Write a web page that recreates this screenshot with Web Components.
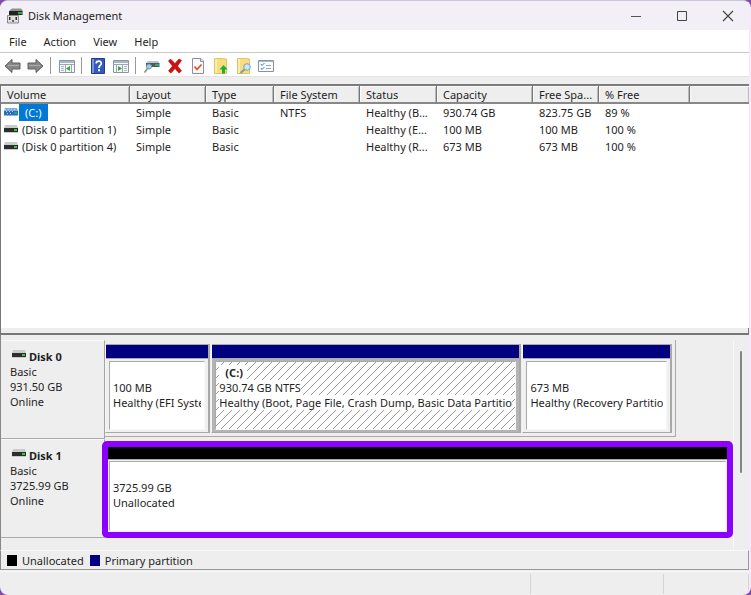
<!DOCTYPE html>
<html lang="en">
<head>
<meta charset="utf-8">
<meta name="viewport" content="width=device-width, initial-scale=1">
<title>Disk Management</title>
<style>
  html, body { height: 100%; }
  body {
    margin: 0;
    background: #7d4fa8;
    color: #1e1e1e;
    font: 11px/15px "Noto Sans", "Open Sans", sans-serif;
    overflow: hidden;
  }
</style>
</head>
<body>
<disk-window>
  <title-bar slot="title">Disk Management</title-bar>
  <menu-bar slot="menu"></menu-bar>
  <tool-bar slot="tools"></tool-bar>
  <volume-list slot="volumes"></volume-list>
  <disk-pane slot="disks">
    <disk-row name="Disk 0" kind="Basic" size="931.50 GB" state="Online">
      <disk-partition style="--share:104" size="100 MB" status="Healthy (EFI Syste"></disk-partition>
      <disk-partition style="--share:312" selected label="(C:)" size="930.74 GB NTFS" status="Healthy (Boot, Page File, Crash Dump, Basic Data Partitio"></disk-partition>
      <disk-partition style="--share:149" size="673 MB" status="Healthy (Recovery Partitio"></disk-partition>
    </disk-row>
    <disk-row whole name="Disk 1" kind="Basic" size="3725.99 GB" state="Online">
      <disk-partition unallocated size="3725.99 GB" status="Unallocated"></disk-partition>
    </disk-row>
  </disk-pane>
  <color-legend slot="legend"></color-legend>
  <status-bar slot="status"></status-bar>
</disk-window>

<script>
const define = (name, html, setup) => customElements.define(name, class extends HTMLElement {
  constructor() {
    super();
    const t = document.createElement('template');
    t.innerHTML = html;
    this.attachShadow({ mode: 'open' }).append(t.content.cloneNode(true));
  }
  connectedCallback() { if (setup) setup(this, this.shadowRoot); }
});

define('disk-window', `
<style>
  :host { display: grid; grid-template-rows: auto auto auto minmax(0, 1fr) auto auto auto; box-sizing: border-box; height: 100vh;
    background: #eeeeee; border-radius: 8px; overflow: hidden; border-top: 1px solid #cdc3da; border-right: 2px solid #f5e9fb; }
  .list { margin-top: 7px; min-height: 0; display: grid; }
</style>
<slot name="title"></slot>
<slot name="menu"></slot>
<slot name="tools"></slot>
<div class="list"><slot name="volumes"></slot></div>
<slot name="disks"></slot>
<slot name="legend"></slot>
<slot name="status"></slot>`);

define('title-bar', `
<style>
  :host { display: flex; align-items: center; gap: 4px; height: 29px; background: #f2eff7; padding-left: 7px; }
  h1 { font: inherit; margin: 0 auto 0 1px; }
  button { width: 42px; height: 29px; padding: 0; border: 0; background: none; display: grid; place-items: center; }
</style>
<svg width="16" height="16" viewBox="0 0 16 16" aria-hidden="true">
  <path d="M3 2 5 .5h9L15.500 2v1.500H2z" fill="#8d9490"/><path d="M2 3h13.500v4H2z" fill="#1d2421"/><path d="M11 4h4v2h-4z" fill="#2fae3e"/>
  <path d="M.5 7.500h11V15H.5z" fill="#dedede" stroke="#8a8a8a"/><path d="M2 9h1.500v3H2zM8.500 9H10v3H8.500z" fill="#333"/><path d="M5 12h2v2H5z" fill="#666"/>
</svg>
<h1><slot></slot></h1>
<button aria-label="Minimize"><svg width="12" height="12"><path d="M1 6.500h10" stroke="#555"/></svg></button>
<button aria-label="Maximize"><svg width="12" height="12"><path d="M1.500 1.500h9v9h-9z" fill="none" stroke="#444"/></svg></button>
<button aria-label="Close"><svg width="12" height="12"><path d="m1 1 10 10M11 1 1 11" stroke="#444" stroke-width="1.200"/></svg></button>`);

define('menu-bar', `
<style>
  :host { display: block; background: #fff; border-bottom: 1px solid #c9c9c9; }
  nav { display: flex; height: 22px; gap: 17px; padding-left: 9px; }
  button { font: inherit; color: inherit; border: 0; background: none; padding: 0; }
</style>
<nav aria-label="Menu"><button>File</button><button>Action</button><button>View</button><button>Help</button></nav>`);

define('tool-bar', `
<style>
  :host { display: flex; align-items: center; background: #fff; padding: 2px 0 0 1px; box-sizing: border-box; height: 24px; border-bottom: 1px solid #e4e4e4; }
  button { width: 23px; height: 20px; padding: 0; border: 0; background: none; display: grid; place-items: center; }
  i { width: 8px; height: 17px; box-sizing: border-box; background: linear-gradient(#999, #999) 3px 0 / 1px 100% no-repeat; }
</style>
<button aria-label="Back"><svg width="17" height="16"><path d="M1 8 8 1.500v3.500h8v6H8v3.500z" fill="#888" stroke="#5e5e5e"/><path d="M4 7.500h11" stroke="#aaa"/></svg></button>
<button aria-label="Forward"><svg width="17" height="16"><path d="M16 8 9 1.500v3.500H1v6h8v3.500z" fill="#888" stroke="#5e5e5e"/><path d="M2 7.500h11" stroke="#aaa"/></svg></button>
<i></i>
<button aria-label="Show console tree"><svg width="16" height="16"><path d="M.5 2.500h15v12H.5z" fill="#f6f8fa" stroke="#8995a5"/><path d="M1 3h14v2H1z" fill="#a9b6c6"/><path d="M1 6.500h14M6.500 7v7M12.500 7v7" stroke="#9ba7b5"/><path d="M2 8.500h3M2 10.500h3M2 12.500h3" stroke="#a7b6c8"/><path d="M11 8v5l-4-2.500z" fill="#35a834"/></svg></button>
<i></i>
<button aria-label="Help"><svg width="14" height="16"><path d="M.5.5h13v15H.5z" fill="#3459bd" stroke="#223d8e"/><path d="M1 1h2v14H1z" fill="#7894e0"/><path d="M5.200 5.500C5.200 2.300 10.300 2.300 10.300 5.400 10.300 7.500 7.900 7.500 7.900 10" fill="none" stroke="#fff" stroke-width="1.700"/><path d="M7 11.300h2v2H7z" fill="#fff"/></svg></button>
<button aria-label="Show action pane"><svg width="16" height="16"><path d="M.5 2.500h15v12H.5z" fill="#f6f8fa" stroke="#8995a5"/><path d="M1 3h14v2H1z" fill="#a9b6c6"/><path d="M1 6.500h14M3.500 7v7M9.500 7v7" stroke="#9ba7b5"/><path d="M11 8.500h3M11 10.500h3M11 12.500h3" stroke="#a7b6c8"/><path d="M5 8v5l4-2.500z" fill="#35a834"/></svg></button>
<i></i>
<button aria-label="Refresh"><svg width="16" height="16"><path d="m3 4 1-1h10l1 2v3H2z" fill="#b9c4c8"/><path d="M2 5h13.500v4H2z" fill="#4c5960"/><path d="M11 6h4v2h-4z" fill="#2dad75"/><circle cx="5" cy="8.500" r="2.500" fill="#9fcfe4" stroke="#7895a5"/><path d="m3.500 10.500-3 4" stroke="#8b9aa2" stroke-width="1.800"/></svg></button>
<button aria-label="Delete"><svg width="16" height="16"><path d="m1.500 3 2-2L8 5.500 12 1l2.500 1.500L10.500 8l4 5-2.500 2L8 10.500 4 15l-2.500-2L5.500 8z" fill="#cf1111" stroke="#a40000" stroke-width=".6"/></svg></button>
<button aria-label="Properties"><svg width="14" height="16"><path d="M1.500.5H10l2.500 2.500v12.500h-11z" fill="#f9f9fb" stroke="#8d929a"/><path d="M9.500.5V3.500h3" fill="#ddd" stroke="#8d929a"/><path d="m3.500 8.500 2.500 3 4.500-5" fill="none" stroke="#dc5427" stroke-width="1.800"/></svg></button>
<button aria-label="Open"><svg width="16" height="16"><path d="M1.500.5h8l4 .5v14.500h-12z" fill="#f6df82" stroke="#e0c463"/><path d="M2 1h2v14H2z" fill="#fbedab"/><path d="m10.500 7 4 4.500H12v4H9v-4H6.500z" fill="#25ad2a"/></svg></button>
<button aria-label="Explore"><svg width="16" height="16"><path d="M1.500.5h8l4 .5v14.500h-12z" fill="#f6df82" stroke="#e0c463"/><path d="M2 1h2v14H2z" fill="#fbedab"/><path d="m9 11-4.500 4" stroke="#8798a7" stroke-width="2"/><circle cx="11" cy="9" r="3.300" fill="#cce7f6" stroke="#7c9fb9"/></svg></button>
<button aria-label="Settings"><svg width="17" height="16"><path d="M.5 2.500h15v11H.5z" fill="#f9fbfd" stroke="#8793a3"/><path d="M1 3h14v1H1z" fill="#a9b8ca"/><path d="m3 6 1 1.500L6.500 5M3 10l1 1.500L6.500 9" fill="none" stroke="#3d83c9"/><path d="M8 7.500h5M8 10.500h5" stroke="#9aa3ad"/></svg></button>`);

const driveIcon = `<svg width="14" height="8" viewBox="0 0 14 8" aria-hidden="true"><path d="M1 0h12l1 3H0z" fill="#c9cccb"/><path d="M0 3h14v4H0z" fill="#2a2f2d"/><path d="M0 7h14v1H0z" fill="#c9caca"/><path d="M10 4h3v2h-3z" fill="#35c443"/></svg>`;
const chosenIcon = `<svg width="14" height="8" viewBox="0 0 14 8" aria-hidden="true"><path d="M1 0h12l1 3H0z" fill="#7eaee0"/><path d="M0 3h14v4H0z" fill="#2d6fb0"/><path d="M0 7h14v1H0z" fill="#8fb7e0"/><path d="M1 1.500h1M4 1.500h1M7 1.500h1M10 1.500h1M2 3.500h1M5 3.500h1M8 3.500h1M3 5.500h1M6 5.500h1" stroke="#b5d3ef"/><path d="M10 4h3v2h-3z" fill="#239a9e"/></svg>`;

define('volume-list', `
<style>
  :host { display: flex; flex-direction: column; min-height: 0; border-left: 1px solid #777; border-top: 2px solid #7c7c7c; border-bottom: 2px solid #777; background: #fff; }
  .scroll { flex: 1; min-height: 0; overflow: hidden; }
  .grip { height: 5px; background: #eee; border-right: 1px solid #777; }
  table { width: 100%; table-layout: fixed; border-collapse: separate; border-spacing: 0; }
  th, td { font-weight: 400; text-align: left; padding: 0 0 0 6px; white-space: nowrap; overflow: hidden; box-sizing: border-box; }
  th { height: 18px; background: #eee; border-right: 1px solid #777; border-bottom: 2px solid #888; box-shadow: inset 1px 1px #fafafa, inset -1px 0 #bbb; }
  th:last-child { border-right: 0; }
  td { height: 17px; line-height: 17px; }
  td:first-child { padding: 0 0 0 3px; }
  .name { display: flex; align-items: center; }
  .name svg { margin-bottom: 1px; }
  .name span { padding: 0 4px; }
  .name .chosen { background: #0078d7; color: #fff; padding: 0 6px; margin-left: 1px; }
</style>
<div class="scroll"><table>
  <colgroup><col style="width:129px"><col style="width:76px"><col style="width:68px"><col style="width:86px"><col style="width:77px"><col style="width:96px"><col style="width:66px"><col style="width:91px"><col></colgroup>
  <thead><tr></tr></thead><tbody></tbody>
</table></div>
<div class="grip"></div>`, (el, root) => {
  const heads = ['Volume', 'Layout', 'Type', 'File System', 'Status', 'Capacity', 'Free Spa...', '% Free', ''];
  const rows = [
    ['(C:)', 'Simple', 'Basic', 'NTFS', 'Healthy (B...', '930.74 GB', '823.75 GB', '89 %', ''],
    ['(Disk 0 partition 1)', 'Simple', 'Basic', '', 'Healthy (E...', '100 MB', '100 MB', '100 %', ''],
    ['(Disk 0 partition 4)', 'Simple', 'Basic', '', 'Healthy (R...', '673 MB', '673 MB', '100 %', '']
  ];
  root.querySelector('thead tr').innerHTML = heads.map(h => `<th scope="col">${h}</th>`).join('');
  root.querySelector('tbody').innerHTML = rows.map((r, n) => '<tr>' + r.map((c, i) => i
    ? `<td>${c}</td>`
    : `<td><div class="name">${n ? driveIcon : chosenIcon}<span class="${n ? '' : 'chosen'}">${c}</span></div></td>`).join('') + '</tr>').join('');
});

define('disk-pane', `
<style>
  :host { display: grid; grid-template-columns: minmax(0, 1fr) 15px; border-left: 1px solid #888; padding-top: 5px; }
  .rows { padding-bottom: 12px; border-right: 1px solid #f8f8f8; }
  .bar { width: 2px; height: 122px; background: #858585; border-radius: 1px; margin: 11px 0 0 6px; }
</style>
<div class="rows"><slot></slot></div><div><div class="bar"></div></div>`);

define('disk-row', `
<style>
  :host { display: grid; grid-template-columns: 104px minmax(0, 1fr); height: 99px; box-sizing: border-box; }
  .info { border-right: 1px solid #a5a5a5; border-bottom: 1px solid #aaa; border-top: 1px solid #f8f8f8; padding: 8px 0 0 9px; }
  h2 { margin: 0; font: inherit; font-weight: 700; display: flex; align-items: center; gap: 3px; padding-left: 2px; }
  h2 svg { margin-bottom: 5px; }
  p { margin: 0; }
  .parts { display: flex; gap: 1px; margin: 0 57px 2px 0; padding: 4px 3px 3px 0; border-right: 1px solid #aaa; border-bottom: 1px solid #aaa; }
  :host([whole]) .parts { margin: 2px 0 0 -3px; padding: 0; border: 0; }
</style>
<section class="info"><h2>${driveIcon}<span id="name"></span></h2><p id="kind"></p><p id="size"></p><p id="state"></p></section>
<div class="parts"><slot></slot></div>`, (el, root) => {
  for (const k of ['name', 'kind', 'size', 'state']) root.getElementById(k).textContent = el.getAttribute(k);
});

define('disk-partition', `
<style>
  :host { --bar: #000080; --frame: #f0f0f0; display: flex; flex-direction: column; flex: var(--share, 1) 1 0; min-width: 0; box-sizing: border-box; border-right: 2px solid #a9a9a9; border-bottom: 1px solid #a9a9a9; border-left: 1px solid #f4f4f4; }
  .bar { height: 13px; background: var(--bar); border: 1px solid #aaa; border-width: 1px 0 1px 0; }
  .frame { flex: 1; display: grid; background: var(--frame); padding: 2px 3px; min-height: 0; grid-template-columns: minmax(0, 1fr); }
  .box { background-color: #fff; border: 1px solid #aaa; border-right-color: #f8f8f8; border-bottom-color: #f8f8f8; padding: 3px; box-sizing: border-box; }
  p { margin: 0; min-height: 15px; overflow: hidden; white-space: nowrap; }
  span { display: inline-block; vertical-align: top; }
  #label { font-weight: 700; }
  :host([selected]) { --frame: #b4b4b4; }
  :host([selected]) .box { background-image: linear-gradient(to bottom right, transparent 44%, #999 45% 55%, transparent 56%); background-size: 8px 8px; }
  :host([selected]) span { background: #fff; }
  :host([selected]) #label { padding: 0 4px 0 6px; }
  :host([unallocated]) { --bar: #000; border: 6px solid #8b00ff; border-radius: 5px; }
  :host([unallocated]) .bar { border-top: 0; height: 12px; }
  :host([unallocated]) .frame { padding: 1px; }
</style>
<div class="bar"></div>
<div class="frame"><div class="box"><p><span id="label"></span></p><p><span id="size"></span></p><p><span id="status"></span></p></div></div>`, (el, root) => {
  for (const k of ['label', 'size', 'status']) root.getElementById(k).textContent = el.getAttribute(k) || '';
});

define('color-legend', `
<style>
  :host { display: flex; align-items: center; height: 18px; gap: 6px; padding-left: 6px; border: 1px solid #f8f8f8; border-left-color: #888; border-right-color: #999; border-bottom: 1px solid #999; }
  i { width: 10px; height: 11px; background: #000; margin-right: -1px; }
  i.primary { background: #000080; }
</style>
<i></i><span>Unallocated</span><i class="primary"></i><span>Primary partition</span>`);

define('status-bar', `
<style>
  :host { display: grid; grid-template-columns: minmax(0, 1fr) 133px 85px; height: 23px; border-top: 1px solid #f8f8f8; margin-top: 1px; }
  i { margin: 2px 0 1px; border-right: 1px solid #d5d5d5; }
</style>
<i></i><i></i><i></i>`);
</script>
</body>
</html>
